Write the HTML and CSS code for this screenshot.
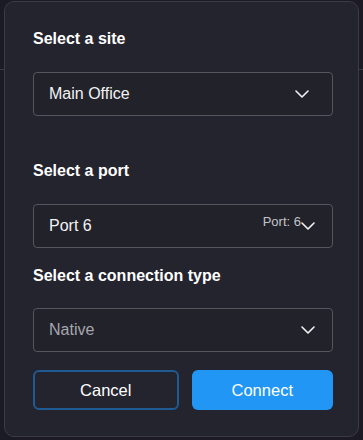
FILE: index.html
```html
<!DOCTYPE html>
<html lang="en">
<head>
  <meta charset="UTF-8" />
  <title>Connect</title>
  <meta name="viewport" content="width=device-width, initial-scale=1.0"/>
  <link rel="stylesheet" href="styles.css">
</head>
<body>

  <!-- Connect dialog -->
  <div class="modal">
    <div class="field field-site">
      <label>Select a site</label>
      <div class="select select-site">
        <span class="value">Main Office</span>
        <svg class="chevron" width="14" height="8" viewBox="0 0 14 8"><polyline points="1,1 7,7 13,1" /></svg>
      </div>
    </div>

    <div class="field field-port">
      <label>Select a port</label>
      <div class="select">
        <span class="value">Port 6</span>
        <span class="hint">Port: 6</span>
        <svg class="chevron" width="14" height="8" viewBox="0 0 14 8"><polyline points="1,1 7,7 13,1" /></svg>
      </div>
    </div>

    <div class="field field-type">
      <label>Select a connection type</label>
      <div class="select">
        <span class="value muted">Native</span>
        <svg class="chevron" width="14" height="8" viewBox="0 0 14 8"><polyline points="1,1 7,7 13,1" /></svg>
      </div>
    </div>

    <div class="actions">
      <button class="btn btn-cancel">Cancel</button>
      <button class="btn btn-connect">Connect</button>
    </div>
  </div>

</body>
</html>
```

FILE: styles.css
```css
* {
  box-sizing: border-box;
  margin: 0;
  padding: 0;
  font-family: 'Liberation Sans', Arial, sans-serif;
}

body {
  background-color: #1b1a25;
  background-image: linear-gradient(#3a3a46, #3a3a46);
  background-size: 100% 1px;
  background-position: 0 69px;
  background-repeat: no-repeat;
  color: #fff;
  padding: 1px 4px 3px 4px;
  width: 363px;
  height: 440px;
}

.modal {
  width: 355px;
  height: 436px;
  background: #24242e;
  border: 1px solid #3b3b46;
  border-radius: 10px;
  padding: 27px 25px 0 28px;
}

label {
  display: block;
  font-size: 16px;
  font-weight: 700;
  line-height: 20px;
  margin-bottom: 23px;
}

.field-port {
  margin-top: 45px;
}

.field-type {
  margin-top: 18px;
}

.field-type label {
  margin-bottom: 22px;
}

.select {
  width: 300px;
  height: 44px;
  border: 1px solid #55555f;
  border-radius: 4px;
  background: #22222b;
  display: flex;
  align-items: center;
  padding: 0 17px 0 15px;
}

.select-site {
  padding-right: 23px;
}

.value {
  flex: 1;
  font-size: 16px;
  color: #f2f2f2;
}

.value.muted {
  color: #a6a6ae;
}

.hint {
  font-size: 13px;
  color: #c4c4c8;
  margin-bottom: 9px;
}

.chevron {
  fill: none;
  stroke: #f2f2f2;
  stroke-width: 1.6;
  stroke-linecap: round;
  stroke-linejoin: round;
}

.actions {
  display: flex;
  gap: 13px;
  width: 300px;
  margin-top: 18px;
}

.btn {
  flex: 1;
  height: 40px;
  border-radius: 6px;
  font-size: 16.5px;
  color: #fff;
  cursor: pointer;
}

.btn-cancel {
  background: transparent;
  border: 2px solid #1f5a93;
}

.btn-connect {
  background: #2196f5;
  border: none;
}
```
